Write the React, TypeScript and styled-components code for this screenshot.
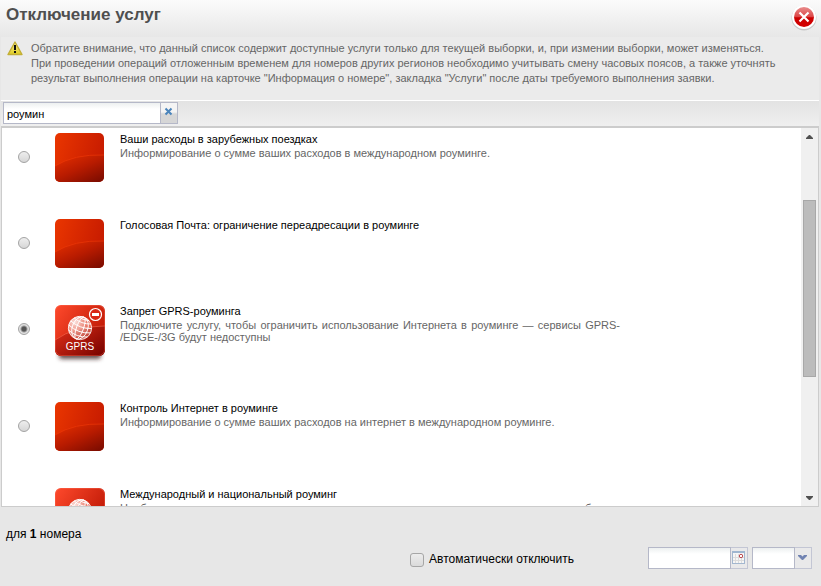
import React, { useState } from "react";
import styled, { createGlobalStyle, css } from "styled-components";

const GlobalStyle = createGlobalStyle`
  * { box-sizing: border-box; }
  html, body, #root { height: 100%; margin: 0; }
  body {
    background: #e7e7e7;
    font-family: "Liberation Sans", Arial, sans-serif;
    font-size: 11px;
    color: #000;
  }
  button, input { font-family: inherit; }
`;

const Dialog = styled.main`
  display: flex;
  flex-direction: column;
  height: 100vh;
  min-height: 400px;
`;

const Header = styled.header`
  display: flex;
  justify-content: space-between;
  height: 37px;
  padding: 4px 4px 0 6px;
  background: linear-gradient(#fbfbfb, #e7e7e7);
`;

const Title = styled.h1`
  margin: 0;
  font-size: 17px;
  line-height: 21px;
  color: #4f4f4f;
`;

const CloseButton = styled.button`
  width: 26px;
  height: 28px;
  padding: 0;
  border: 0;
  background: none;
  cursor: pointer;
  svg { display: block; }
`;

const Notice = styled.section`
  display: flex;
  gap: 7px;
  margin: 0 2px 0 1px;
  height: 64px;
  padding: 4px 32px 0 6px;
  background: #ebebeb;
  border-bottom: 1px solid #fff;
  color: #666;
  svg { flex: none; }
`;

const NoticeText = styled.p`
  margin: 0;
  line-height: 15px;
`;

const SearchBar = styled.div`
  display: flex;
  margin: 0 2px 0 1px;
  height: 25px;
  padding: 1px 2px;
  background: linear-gradient(#e3e3e3, #efefef);
`;

const field = css`
  height: 22px;
  border: 1px solid #b5b8c8;
  border-radius: 0;
  background: linear-gradient(#edf0f0, #fff 6px);
  font-size: 11px;
  padding: 1px 3px 0;
  outline: none;
`;

const Field = styled.input<{ $width: number }>`
  ${field}
  width: ${(p) => p.$width}px;
`;

const FieldButton = styled.button<{ $pale?: boolean }>`
  display: flex;
  justify-content: center;
  width: 17px;
  height: 22px;
  padding: ${(p) => (p.$pale ? 3 : 4)}px 1px 0 0;
  border: 1px solid ${(p) => (p.$pale ? "#c3c6d4" : "#b5b8c8")};
  border-left: 0;
  background: ${(p) =>
    p.$pale ? "#e9e9ea" : "linear-gradient(#f4f4f4 45%, #d6d6d6 55%)"};
  svg { flex: none; }
`;

const ListPanel = styled.section`
  display: flex;
  flex: 1;
  min-height: 0;
  margin: 0 2px 0 1px;
  border: 1px solid #ccc;
  border-top-width: 2px;
  background: #fff;
`;

const List = styled.ul`
  flex: 1;
  min-width: 0;
  margin: 0;
  padding: 4px 0 0;
  overflow: hidden;
  list-style: none;
`;

const Row = styled.li<{ $tall: boolean }>`
  display: flex;
  align-items: flex-start;
  height: ${(p) => (p.$tall ? 97 : 86)}px;
  padding-left: 16px;
`;

const Radio = styled.input`
  appearance: none;
  flex: none;
  width: 12px;
  height: 12px;
  margin: 19px 25px 0 0;
  border: 1px solid #a3a3a3;
  border-radius: 50%;
  background: linear-gradient(#eee, #d6d6d6);
  &:checked {
    background: radial-gradient(circle, #555 2px, #e0e0e0 4px);
  }
`;

const IconBox = styled.div`
  flex: none;
  width: 65px;
  padding-top: 1px;
  svg { display: block; }
`;

const RowText = styled.label`
  width: 500px;
  min-width: 0;
  color: #666;
  line-height: 12px;
  text-align: justify;
`;

const RowTitle = styled.span`
  display: block;
  padding-bottom: 1px;
  color: #000;
  line-height: 14px;
`;

const Scrollbar = styled.div`
  display: flex;
  flex-direction: column;
  align-items: center;
  flex: none;
  width: 17px;
  background: #f0f0f0;
`;

const ScrollButton = styled.button`
  display: flex;
  align-items: center;
  justify-content: center;
  width: 17px;
  height: 17px;
  padding: 0;
  border: 0;
  background: none;
`;

const Track = styled.div`
  display: grid;
  grid-template-rows: 55fr 177fr 112fr;
  flex: 1;
  width: 13px;
`;

const Thumb = styled.div`
  grid-row: 2;
  border: 1px solid #a8a8a8;
  background: #bcbcbc;
`;

const Footer = styled.footer`
  flex: none;
  height: 79px;
  padding: 19px 9px 0 6px;
  font-size: 12px;
  line-height: 16px;
`;

const Count = styled.div`
  height: 21px;
`;

const Controls = styled.div`
  display: flex;
  justify-content: flex-end;
  align-items: flex-start;
`;

const AutoLabel = styled.label`
  display: flex;
  gap: 5px;
  padding-top: 4px;
  margin-right: 70px;
`;

const Checkbox = styled.input`
  appearance: none;
  width: 14px;
  height: 14px;
  margin: 2px 0 0;
  border: 1px solid #a6a6a6;
  border-radius: 3px;
  background: linear-gradient(#ececec, #dadada);
  &:checked { background: #666; }
`;

const FieldGroup = styled.div`
  display: flex;
  margin-left: 4px;
`;

function PlainIcon() {
  return (
    <svg width="49" height="49" viewBox="0 0 49 49" aria-hidden="true">
      <defs>
        <linearGradient id="plainTop" x1="0" y1="0" x2="1" y2="0.3">
          <stop offset="0" stopColor="#ea3600" />
          <stop offset="1" stopColor="#c81c00" />
        </linearGradient>
        <linearGradient id="plainLow" x1="0.1" y1="0" x2="0.9" y2="1">
          <stop offset="0" stopColor="#e42f00" />
          <stop offset="0.5" stopColor="#b81b00" />
          <stop offset="1" stopColor="#7c0c00" />
        </linearGradient>
        <clipPath id="plainClip"><rect width="49" height="49" rx="5" /></clipPath>
      </defs>
      <g clipPath="url(#plainClip)">
        <rect width="49" height="49" fill="url(#plainTop)" />
        <path d="M0 33Q19 21 49 22V49H0Z" fill="url(#plainLow)" />
        <path d="M0 33Q19 21 49 22" fill="none" stroke="#f03a08" strokeOpacity="0.6" />
      </g>
    </svg>
  );
}

function GlobeIcon({ badge }: { badge: boolean }) {
  return (
    <svg width="50" height="60" viewBox="0 0 50 60" aria-hidden="true">
      <defs>
        <linearGradient id="globeTop" x1="0" y1="0" x2="1" y2="0.7">
          <stop offset="0" stopColor="#ff4a2c" />
          <stop offset="1" stopColor="#b81402" />
        </linearGradient>
        <linearGradient id="globeLow" x1="0" y1="0" x2="1" y2="0.8">
          <stop offset="0" stopColor="#e4301a" />
          <stop offset="1" stopColor="#7e0500" />
        </linearGradient>
        <radialGradient id="globeBall" cx="0.3" cy="0.25" r="0.9">
          <stop offset="0" stopColor="#fff" stopOpacity="0.85" />
          <stop offset="1" stopColor="#f6a090" stopOpacity="0.25" />
        </radialGradient>
        <filter id="globeBlur" x="-20%" y="-60%" width="140%" height="220%">
          <feGaussianBlur stdDeviation="2" />
        </filter>
        <clipPath id="globeClip"><rect width="50" height="51" rx="6" /></clipPath>
      </defs>
      <rect x="4" y="46" width="42" height="8" rx="3" fill="#402020" fillOpacity="0.8" filter="url(#globeBlur)" />
      <g clipPath="url(#globeClip)">
        <rect width="50" height="51" fill="url(#globeTop)" />
        <path d="M0 35Q20 21 50 21V51H0Z" fill="url(#globeLow)" />
        <path d="M0 35Q20 21 50 21" fill="none" stroke="#ff765c" strokeOpacity="0.5" />
        <rect x="0.5" y="0.5" width="49" height="50" rx="6" fill="none" stroke="#ff735c" strokeOpacity="0.35" />
      </g>
      <circle cx="25" cy="23" r="12" fill="url(#globeBall)" />
      <g fill="none" stroke="#fff" strokeWidth="0.9" transform="rotate(20 25 23)">
        <circle cx="25" cy="23" r="11.6" strokeOpacity="0.8" />
        <ellipse cx="25" cy="23" rx="3.5" ry="11.6" />
        <ellipse cx="25" cy="23" rx="7.8" ry="11.6" />
        <path d="M16 15.5Q25 19 34 15.5M13.8 19.5Q25 24 36.2 19.5M13.4 24Q25 29 36.6 24M15 29Q25 33 35 29M19 13Q25 14.5 31 13" />
      </g>
      {badge && (
        <g>
          <text x="25" y="45" textAnchor="middle" fontFamily="Liberation Sans, Arial, sans-serif" fontSize="10" fill="#fff">GPRS</text>
          <circle cx="40.5" cy="9.5" r="6" fill="#d92514" stroke="#fff" strokeWidth="1.2" />
          <rect x="37" y="8" width="7" height="3" fill="#fff" />
        </g>
      )}
    </svg>
  );
}

function Arrow({ down }: { down?: boolean }) {
  return (
    <svg width="7" height="4" viewBox="0 0 7 4" aria-hidden="true">
      <path d={down ? "M0 0H7V1L4 4H3L0 1Z" : "M0 4H7V3L4 0H3L0 3Z"} fill="#505050" />
    </svg>
  );
}

type Service = { title: string; text: React.ReactNode; icon: "plain" | "gprs" | "globe" };

const services: Service[] = [
  { title: "Ваши расходы в зарубежных поездках", text: "Информирование о сумме ваших расходов в международном роуминге.", icon: "plain" },
  { title: "Голосовая Почта: ограничение переадресации в роуминге", text: "", icon: "plain" },
  {
    title: "Запрет GPRS-роуминга",
    text: <>Подключите услугу, чтобы ограничить использование Интернета в роуминге — сервисы GPRS-<wbr />/EDGE-/3G будут недоступны</>,
    icon: "gprs",
  },
  { title: "Контроль Интернет в роуминге", text: "Информирование о сумме ваших расходов на интернет в международном роуминге.", icon: "plain" },
  { title: "Международный и национальный роуминг", text: "Необходимо для исходящих и входящих вызовов и отправки смс за пределами области подключения", icon: "globe" },
];

export default function App() {
  const [query, setQuery] = useState("роумин");
  const [selected, setSelected] = useState(2);
  return (
    <>
      <GlobalStyle />
      <Dialog>
        <Header>
          <Title>Отключение услуг</Title>
          <CloseButton aria-label="Закрыть">
            <svg width="26" height="28" viewBox="0 0 26 28">
              <defs>
                <linearGradient id="closeFill" x1="0" y1="0" x2="0" y2="1">
                  <stop offset="0" stopColor="#e88c8c" />
                  <stop offset="0.48" stopColor="#dc4646" />
                  <stop offset="0.54" stopColor="#cb0000" />
                  <stop offset="1" stopColor="#d40000" />
                </linearGradient>
              </defs>
              <circle cx="13" cy="14" r="12.5" fill="#000" fillOpacity="0.15" />
              <circle cx="13" cy="13" r="12" fill="#fff" />
              <circle cx="13" cy="13" r="10" fill="url(#closeFill)" />
              <path d="M8.5 8.5L17.5 17.5M17.5 8.5L8.5 17.5" stroke="#fff" strokeWidth="2.2" />
            </svg>
          </CloseButton>
        </Header>
        <Notice>
          <svg width="17" height="16" viewBox="0 0 17 16" aria-hidden="true">
            <defs>
              <linearGradient id="warnFill" x1="0" y1="0" x2="0" y2="1">
                <stop offset="0" stopColor="#f7ef9a" />
                <stop offset="1" stopColor="#e0cc20" />
              </linearGradient>
            </defs>
            <path d="M8 1L15 13.5H1Z" fill="url(#warnFill)" stroke="#c2ae36" strokeWidth="1.4" strokeLinejoin="round" />
            <path d="M7 4H9V9H7ZM7 10H9V12H7Z" fill="#111" />
          </svg>
          <NoticeText>
            Обратите внимание, что данный список содержит доступные услуги только для текущей выборки, и, при измении выборки, может изменяться.
            <br />
            При проведении операций отложенным временем для номеров других регионов необходимо учитывать смену часовых поясов, а также уточнять
            <br />
            результат выполнения операции на карточке "Информация о номере", закладка "Услуги" после даты требуемого выполнения заявки.
          </NoticeText>
        </Notice>
        <SearchBar>
          <Field $width={158} aria-label="Поиск услуги" value={query} onChange={(e) => setQuery(e.target.value)} />
          <FieldButton aria-label="Очистить" onClick={() => setQuery("")}>
            <svg width="9" height="9" viewBox="0 0 9 9">
              <path d="M1.5 1.5L7.5 7.5M7.5 1.5L1.5 7.5" stroke="#4a84bb" strokeWidth="2" />
            </svg>
          </FieldButton>
        </SearchBar>
        <ListPanel>
          <List>
            {services.map((s, i) => (
              <Row key={s.title} $tall={s.icon !== "plain"}>
                <Radio type="radio" name="service" id={`service-${i}`} checked={selected === i} onChange={() => setSelected(i)} />
                <IconBox>{s.icon === "plain" ? <PlainIcon /> : <GlobeIcon badge={s.icon === "gprs"} />}</IconBox>
                <RowText htmlFor={`service-${i}`}>
                  <RowTitle>{s.title}</RowTitle>
                  {s.text}
                </RowText>
              </Row>
            ))}
          </List>
          <Scrollbar>
            <ScrollButton aria-label="Вверх"><Arrow /></ScrollButton>
            <Track><Thumb /></Track>
            <ScrollButton aria-label="Вниз"><Arrow down /></ScrollButton>
          </Scrollbar>
        </ListPanel>
        <Footer>
          <Count>для <b>1</b> номера</Count>
          <Controls>
            <AutoLabel>
              <Checkbox type="checkbox" />
              Автоматически отключить
            </AutoLabel>
            <FieldGroup>
              <Field $width={83} aria-label="Дата" />
              <FieldButton $pale aria-label="Выбрать дату">
                <svg width="13" height="13" viewBox="0 0 13 13">
                  <rect x="0.5" y="0.5" width="12" height="12" fill="#f6f6f6" stroke="#a3b7cf" />
                  <path d="M0 1H13" stroke="#9fb6d0" strokeWidth="2" />
                  <path d="M3.5 3V12M6.5 3V12M9.5 3V12M1 6.5H12M1 9.5H12" stroke="#dcdcdc" />
                  <circle cx="9" cy="5" r="1.7" fill="#fff" stroke="#bb4a50" />
                </svg>
              </FieldButton>
            </FieldGroup>
            <FieldGroup>
              <Field $width={43} aria-label="Время" />
              <FieldButton $pale aria-label="Выбрать время">
                <svg width="9" height="12" viewBox="0 0 9 12">
                  <path d="M0 4H3L4.5 5.5L6 4H9V5L5 9H4L0 5Z" fill="#7183b2" />
                </svg>
              </FieldButton>
            </FieldGroup>
          </Controls>
        </Footer>
      </Dialog>
    </>
  );
}
